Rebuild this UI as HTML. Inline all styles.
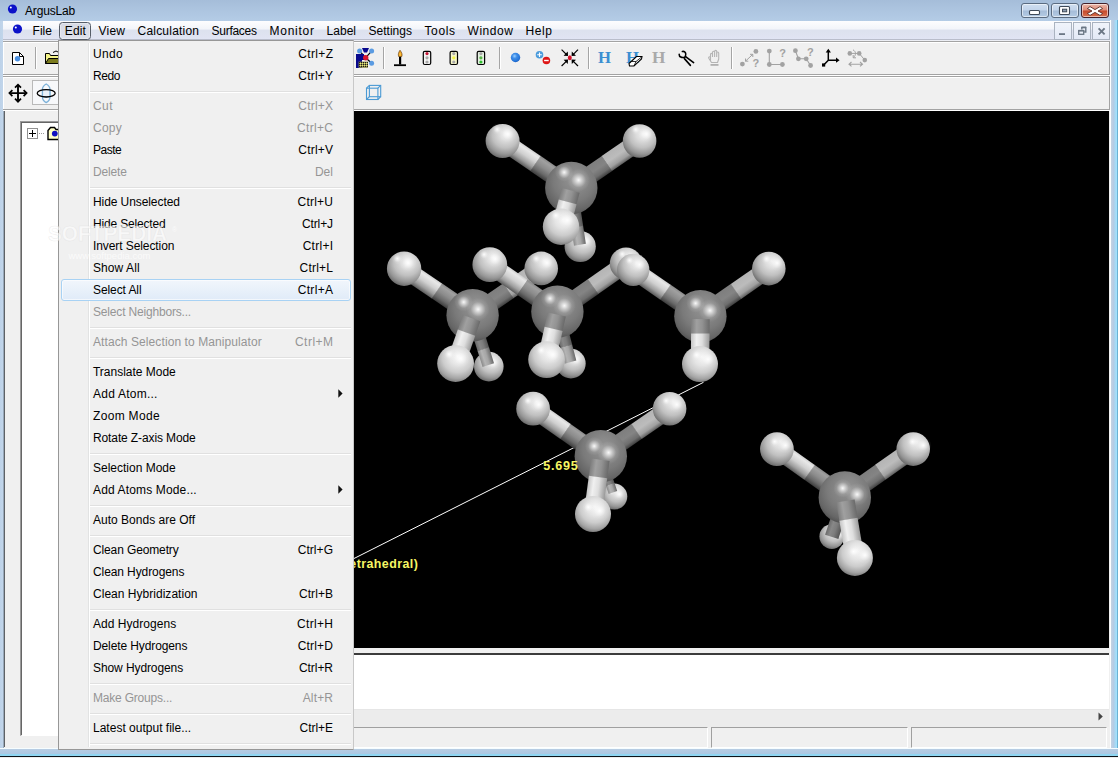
<!DOCTYPE html><html><head><meta charset="utf-8"><title>ArgusLab</title><style>
*{margin:0;padding:0;box-sizing:border-box}
html,body{width:1118px;height:758px;overflow:hidden}
body{position:relative;background:#b7d0e8;font-family:"Liberation Sans",sans-serif;font-size:12px;color:#000}
.abs{position:absolute}
#title{left:0;top:0;width:1118px;height:21px;background:linear-gradient(180deg,#a5bdd9 0,#adc5e0 50%,#b4cce6 100%)}
#frameL{left:0;top:21px;width:4px;height:737px;background:linear-gradient(90deg,#bdd2e9 0,#c1d5ea 2.6px,#93a3b4 3.6px)}
#frameR{left:1110px;top:20px;width:8px;height:737px;background:linear-gradient(90deg,#fdfeff 0,#fdfeff 1px,#c4d3e2 1px,#b4cce6 3.5px,#a9d6f0 5px,#a2e0fc 6.3px,#a2e0fc 7px,#6ab2d4 7.2px)}
#frameB{left:0;top:748px;width:1118px;height:10px;background:linear-gradient(180deg,#f6fdff 0,#f6fdff 1px,#b7cde3 1px,#adc8e2 5.5px,#90d6f2 6px,#90d6f2 8px,#0c141a 8px,#0c141a 9.3px,#eee 9.3px)}
#client{left:3px;top:21px;width:1107px;height:728px;background:#f0f0f0}
#menubar{left:3px;top:21px;width:1107px;height:20px;background:linear-gradient(180deg,#fdfdfe 0,#f3f5fa 40%,#dde2ef 50%,#dfe3f1 80%,#e2e5f6 100%);border-bottom:1px solid #eceef4;box-shadow:inset 0 -1px 0 #b9bdcb}
.mi{position:absolute;top:24px;height:14px;line-height:14px;white-space:nowrap;font-size:12px}
.t{white-space:nowrap}
#tb1{left:3px;top:41px;width:1107px;height:35px;background:#f0f0f0}
#tb2{left:3px;top:76px;width:1107px;height:35px;background:#f0f0f0}
.hl{position:absolute;left:3px;width:1107px;height:1px}
.sep{position:absolute;width:1px;background:#a0a0a0;border-right:0}
#view{left:354px;top:111px;width:755px;height:537px;background:#000}
#menu{left:58px;top:40px;width:296px;height:710px;background:#f0f0f0;border:1px solid #979797;border-right-color:#c8c8c8}
#menu .gut{position:absolute;left:29px;top:2px;width:1px;height:704px;background:#e2e3e3;border-right:0}
#menu .gut2{position:absolute;left:30px;top:2px;width:1px;height:704px;background:#fff}
.it{position:absolute;left:34px;height:22px;line-height:23px;white-space:nowrap}
.sc{position:absolute;height:22px;line-height:23px;white-space:nowrap;right:20px;text-align:right}
.dis{color:#959595}
.msep{position:absolute;left:31px;width:261px;height:2px;border-top:1px solid #e0e0e0;border-bottom:1px solid #fff}
</style></head><body>
<div id="title" class="abs"></div>
<div id="client" class="abs"></div>
<div id="frameL" class="abs"></div><div id="frameR" class="abs"></div><div id="frameB" class="abs"></div>
<svg class="abs" style="left:7px;top:3px" width="12" height="12"><circle cx="5.5" cy="6" r="4.6" fill="#0c12c8"/><circle cx="3.8" cy="4.6" r="1" fill="#fff"/></svg>
<div class="abs t" style="left:25px;top:3px;height:16px;line-height:16px;letter-spacing:-0.153px">ArgusLab</div>
<div id="menubar" class="abs"></div>
<svg class="abs" style="left:12px;top:23px" width="12" height="12"><circle cx="5.5" cy="6" r="4.6" fill="#0c12c8"/><circle cx="3.8" cy="4.6" r="1" fill="#fff"/></svg>
<div class="abs" style="left:59px;top:22px;width:32px;height:18px;border:1px solid #565d68;border-radius:3.5px;background:linear-gradient(180deg,#d6dae4,#dfe2ec);box-shadow:inset 0 0 0 1px rgba(255,255,255,.35)"></div>
<div class="mi" style="left:32.5px;letter-spacing:0.055px">File</div>
<div class="mi" style="left:64.8px;letter-spacing:0.107px">Edit</div>
<div class="mi" style="left:98.5px;letter-spacing:0.236px">View</div>
<div class="mi" style="left:137.5px;letter-spacing:0.214px">Calculation</div>
<div class="mi" style="left:211.5px;letter-spacing:-0.265px">Surfaces</div>
<div class="mi" style="left:269.5px;letter-spacing:0.748px">Monitor</div>
<div class="mi" style="left:326.5px;letter-spacing:0.035px">Label</div>
<div class="mi" style="left:368.5px;letter-spacing:0.020px">Settings</div>
<div class="mi" style="left:424.5px;letter-spacing:0.622px">Tools</div>
<div class="mi" style="left:467.5px;letter-spacing:0.564px">Window</div>
<div class="mi" style="left:525.5px;letter-spacing:0.607px">Help</div>
<div style="position:absolute;top:3px;height:15px;border:1px solid #5a6b80;border-radius:3px;box-shadow:inset 0 0 0 1px rgba(255,255,255,.55);left:1021px;width:28px;background:linear-gradient(180deg,#cfdef0 0,#c2d4ea 48%,#a5bcd8 52%,#b4cbe4 100%)"></div>
<div style="position:absolute;top:3px;height:15px;border:1px solid #5a6b80;border-radius:3px;box-shadow:inset 0 0 0 1px rgba(255,255,255,.55);left:1051px;width:28px;background:linear-gradient(180deg,#cfdef0 0,#c2d4ea 48%,#a5bcd8 52%,#b4cbe4 100%)"></div>
<div style="position:absolute;top:3px;height:15px;border:1px solid #5a6b80;border-radius:3px;box-shadow:inset 0 0 0 1px rgba(255,255,255,.55);left:1081px;width:28px;border-color:#43202a;background:linear-gradient(180deg,#eab5a8 0,#dc8a77 48%,#c5482a 52%,#d8714f 100%)"></div>
<svg class="abs" style="left:1021px;top:3px" width="88" height="15"><rect x="8.5" y="7.5" width="10" height="4" rx="1" fill="#fff" stroke="#3f4a58" stroke-width="1.1"/><rect x="38.5" y="3.5" width="10" height="8" rx="1" fill="#fff" stroke="#3f4a58" stroke-width="1.1"/><rect x="41.5" y="6.2" width="4.2" height="2.6" fill="#8c9cb0" stroke="#3f4a58" stroke-width="1"/><path d="M69 3.6 L74 6.6 L79 3.6 L81.6 5.6 L77 8 L81.6 10.4 L79 12.4 L74 9.4 L69 12.4 L66.4 10.4 L71 8 L66.4 5.6z" fill="#fff" stroke="#5a2a24" stroke-width="0.9" stroke-linejoin="round"/></svg>
<div class="abs" style="left:1054px;top:22px;width:18px;height:18px;border:1px solid #aab3c0;background:linear-gradient(180deg,#f0f4fb,#e3e9f6)"></div>
<div class="abs" style="left:1073px;top:22px;width:18px;height:18px;border:1px solid #aab3c0;background:linear-gradient(180deg,#f0f4fb,#e3e9f6)"></div>
<div class="abs" style="left:1092px;top:22px;width:18px;height:18px;border:1px solid #aab3c0;background:linear-gradient(180deg,#f0f4fb,#e3e9f6)"></div>
<svg class="abs" style="left:1054px;top:22px" width="56" height="18"><rect x="5" y="11.2" width="6" height="1.8" fill="#6b7785"/><path d="M27.8 7.6V5.6h4v4.4h-1.6" fill="none" stroke="#6b7785" stroke-width="1.4"/><path d="M27.4 5.3h4.8" stroke="#6b7785" stroke-width="1.6"/><rect x="24.7" y="8.7" width="5" height="3.6" fill="none" stroke="#6b7785" stroke-width="1.3"/><path d="M24.2 8.6h6" stroke="#6b7785" stroke-width="1.5"/><path d="M44.6 6.4l6 6M50.6 6.4l-6 6" stroke="#6b7785" stroke-width="1.9"/></svg>
<div id="tb1" class="abs"></div><div id="tb2" class="abs"></div>
<div class="hl" style="top:41px;background:#a3a3a3"></div>
<div class="hl" style="top:42px;background:#fff"></div>
<div class="hl" style="top:74px;background:#a3a3a3"></div>
<div class="hl" style="top:75px;background:#fff"></div>
<div class="hl" style="top:76px;background:#a3a3a3"></div>
<div class="hl" style="top:77px;background:#fff"></div>
<div class="hl" style="top:109px;background:#a3a3a3"></div>
<div class="hl" style="top:110px;background:#fff"></div>
<div class="abs" style="left:3px;top:42px;width:1px;height:32px;background:#fff"></div><div class="abs" style="left:3px;top:77px;width:1px;height:32px;background:#fff"></div>
<div class="abs" style="left:1109px;top:41px;width:1px;height:34px;background:#a3a3a3"></div><div class="abs" style="left:1109px;top:76px;width:1px;height:34px;background:#a3a3a3"></div>
<svg class="abs" style="left:0;top:41px" width="1118" height="70" viewBox="0 41 1118 70" font-family="Liberation Serif,serif">
<rect x="35" y="47" width="1" height="22" fill="#a5a5a5"/><rect x="36" y="47" width="1" height="22" fill="#fff"/>
<rect x="383" y="47" width="1" height="22" fill="#a5a5a5"/><rect x="384" y="47" width="1" height="22" fill="#fff"/>
<rect x="499" y="47" width="1" height="22" fill="#a5a5a5"/><rect x="500" y="47" width="1" height="22" fill="#fff"/>
<rect x="588" y="47" width="1" height="22" fill="#a5a5a5"/><rect x="589" y="47" width="1" height="22" fill="#fff"/>
<rect x="731" y="47" width="1" height="22" fill="#a5a5a5"/><rect x="732" y="47" width="1" height="22" fill="#fff"/>
<path d="M12.5 52.5H19.5L23.5 56.5V64.5H12.5z" fill="#fff" stroke="#000" stroke-width="1"/><path d="M19.5 52.5V56.5H23.5" fill="none" stroke="#000" stroke-width="1"/><circle cx="17.5" cy="58.8" r="2.7" fill="#4a90e2"/>
<path d="M45.5 63.5V53.5H49.5L50.5 55.5H58.5V63.5z" fill="#f4f48a" stroke="#000" stroke-width="1"/><path d="M45.5 63.5L48.5 58.5H61.5L58.5 63.5z" fill="#7a7a1c" stroke="#000" stroke-width="1"/><path d="M53 52.5 Q56 49.5 59 52.5" fill="none" stroke="#000" stroke-width="1"/>
<g><path d="M359.6 51.1L365.7 57.7L371.6 51.1M365.7 57.7L371.6 63.3" stroke="#000" stroke-width="1.2" fill="none"/><path d="M362 48H369L367 52.5H364z" fill="#08088c"/><rect x="356" y="54" width="6" height="14" fill="#08088c"/><rect x="356" y="54" width="8" height="6" fill="#08088c"/><circle cx="359.6" cy="51.1" r="2.5" fill="#5a9be2"/><circle cx="371.6" cy="51.1" r="2.5" fill="#5a9be2"/><circle cx="371.6" cy="63.3" r="2.5" fill="#5a9be2"/><circle cx="365.7" cy="57.7" r="2.7" fill="#d81830"/><rect x="358.6" y="61.6" width="9.4" height="6.2" fill="#8c8c50"/><path d="M359 62.5h9M359 64.5h9M359 66.5h9" stroke="#202010" stroke-width="1" stroke-dasharray="1 1"/><path d="M360 63.5h8M360 65.5h8" stroke="#e8e878" stroke-width="1" stroke-dasharray="1 1"/></g>
<rect x="394" y="64.3" width="12" height="1.8" fill="#000"/><rect x="399" y="56.5" width="2.2" height="8" fill="#000"/><path d="M400 50.2C398.5 52.5 398 54 398.6 56.5H401.8C402.6 54.5 401.8 52.5 400 50.2z" fill="#f6a21c" stroke="#503008" stroke-width="0.6"/><path d="M400 52.5C399.5 54 399.6 55 400 56.4 400.8 55 400.6 53.8 400 52.5z" fill="#ffe36a"/>
<rect x="423.3" y="51.3" width="7.4" height="13.2" rx="1.5" fill="#f4f4f4" stroke="#000" stroke-width="1.2"/>
<circle cx="427.0" cy="53.6" r="1.6" fill="#c41838"/>
<circle cx="427.0" cy="57.8" r="1.6" fill="#a8a8a8"/>
<circle cx="427.0" cy="62.0" r="1.6" fill="#a8a8a8"/>
<rect x="450.1" y="51.3" width="7.4" height="13.2" rx="1.5" fill="#f6f6c8" stroke="#000" stroke-width="1.2"/>
<circle cx="453.8" cy="53.6" r="1.6" fill="#a8a8a8"/>
<circle cx="453.8" cy="57.8" r="1.6" fill="#f2f24a"/>
<circle cx="453.8" cy="62.0" r="1.6" fill="#a8a8a8"/>
<rect x="477.2" y="51.3" width="7.4" height="13.2" rx="1.5" fill="#e4f0e0" stroke="#000" stroke-width="1.2"/>
<circle cx="480.9" cy="53.6" r="1.6" fill="#a8a8a8"/>
<circle cx="480.9" cy="57.8" r="1.6" fill="#58b848"/>
<circle cx="480.9" cy="62.0" r="1.6" fill="#30c030"/>
<defs><radialGradient id="bs" cx="0.4" cy="0.35" r="0.7"><stop offset="0" stop-color="#9ad0ff"/><stop offset="0.35" stop-color="#3f8ee8"/><stop offset="0.8" stop-color="#2272d8"/><stop offset="1" stop-color="#1656b4"/></radialGradient></defs>
<circle cx="515.5" cy="57.5" r="4.7" fill="url(#bs)"/>
<circle cx="539.5" cy="54.7" r="3.8" fill="#4c9cdc"/><path d="M537.2 54.7h4.6M539.5 52.4v4.6" stroke="#fff" stroke-width="1.1"/>
<circle cx="546.4" cy="60.5" r="3.8" fill="#de1616"/><path d="M544.1 60.5h4.6" stroke="#fff" stroke-width="1.4"/>
<g stroke="#000" stroke-width="1.2" fill="#000">
<path d="M561.6 49.6L566.3 54.3" fill="none"/><path d="M568.0 56.0L563.6 55.8L567.8 51.6z" stroke="none"/>
<path d="M578.0 49.6L573.3 54.3" fill="none"/><path d="M571.6 56.0L576.0 55.8L571.8 51.6z" stroke="none"/>
<path d="M561.6 66.0L566.3 61.3" fill="none"/><path d="M568.0 59.6L563.6 59.8L567.8 64.0z" stroke="none"/>
<path d="M578.0 66.0L573.3 61.3" fill="none"/><path d="M571.6 59.6L576.0 59.8L571.8 64.0z" stroke="none"/>
</g><ellipse cx="569.8" cy="57.8" rx="2" ry="2.5" fill="#d4142c"/>
<text x="598" y="63" font-size="16" font-weight="bold" fill="#3b8fd2" textLength="13" lengthAdjust="spacingAndGlyphs">H</text>
<text x="626" y="63" font-size="16" font-weight="bold" fill="#3b8fd2" textLength="13" lengthAdjust="spacingAndGlyphs">H</text>
<path d="M629 63.5L636.5 56.5H642L641.5 59L634 66H629.5z" fill="#fff" stroke="#000" stroke-width="1.1"/><path d="M634 66L636 61.5 641.8 56.8M636 61.5H630.5" fill="none" stroke="#000" stroke-width="0.8"/>
<text x="652" y="63" font-size="16" font-weight="bold" fill="#a9a9a9" textLength="13.4" lengthAdjust="spacingAndGlyphs">H</text>
<g fill="none" stroke="#000" stroke-width="1.6" stroke-linecap="round"><path d="M685.3 56.6C686.6 53.4 685.2 51 682.4 51.5"/><path d="M684.7 57.3C681.6 58 679.2 57 679.2 54.4"/><path d="M685.6 56.6L693.6 62.6"/><path d="M684.4 58.6L690.4 65.4"/></g>
<g fill="none" stroke="#b4b4b4" stroke-width="1.1" stroke-linejoin="round"><path d="M710.5 60.5V54.5C710.5 53 712.5 53 712.5 54.5V52.3C712.5 50.8 714.6 50.8 714.6 52.3V51.5C714.6 50 716.7 50 716.7 51.5V53C716.7 51.6 718.7 51.6 718.7 53V59L717.5 62.5H711.5L708.8 58.2C708.2 57 709.5 56.2 710.5 57.5"/><path d="M712.5 54.5V57M714.6 52.3V57M716.7 53V57"/></g><rect x="710.5" y="64" width="8" height="1.8" fill="#b0b0b0"/>
<g fill="#a2a2a2" stroke="#a2a2a2" font-family="Liberation Sans,sans-serif" font-weight="bold" font-size="11">
<circle cx="742.4" cy="64.1" r="2.4" stroke="none"/><circle cx="755.9" cy="51.4" r="2.4" stroke="none"/><path d="M745.5 61.2L752.8 54.3M745.5 58.5V61.2H748.3M750 54.3H752.8V57" fill="none" stroke-width="1"/><text x="752.4" y="66.5" stroke="none">?</text>
<circle cx="769.3" cy="51.1" r="2.4" stroke="none"/><circle cx="769.3" cy="64.5" r="2.4" stroke="none"/><circle cx="782.4" cy="64.5" r="2.4" stroke="none"/><path d="M769.3 51.1V64.5H782.4" fill="none" stroke-width="1.1"/><text x="779.2" y="57.4" stroke="none">?</text>
<circle cx="795.4" cy="50.7" r="2.4" stroke="none"/><circle cx="798.4" cy="58.8" r="2.4" stroke="none"/><circle cx="806.2" cy="58.8" r="2.4" stroke="none"/><circle cx="810.6" cy="65.5" r="2.4" stroke="none"/><path d="M795.4 50.7L798.4 58.8H806.2L810.6 65.5" fill="none" stroke-width="1.1"/><text x="807" y="56.2" stroke="none">?</text>
<circle cx="849.8" cy="53.4" r="2.3" stroke="none"/><circle cx="859.2" cy="53.4" r="2.3" stroke="none"/><circle cx="864.8" cy="60.1" r="2.3" stroke="none"/><path d="M849.8 53.4H859.2L864.8 60.1" fill="none" stroke-width="1"/><path d="M853 49.8C856 51.5 856.5 54.5 853.5 57.6M853.2 55V57.8H856" fill="none" stroke-width="1"/><path d="M849 64.2H862.5M851.5 62L849 64.2L851.5 66.4M860 62L862.5 64.2L860 66.4" fill="none" stroke-width="1.1"/>
</g>
<g stroke="#000" fill="#000"><path d="M828.3 60.2V50.5M828.3 60.2H837.5M828.3 60.2L824.2 64.6" stroke-width="1.5" fill="none"/><path d="M828.3 48.8L830.9 52.4H825.7z" stroke="none"/><path d="M839.6 60.2L836 57.6V62.8z" stroke="none"/><rect x="822" y="63.4" width="3.2" height="3.2" stroke="none"/></g>
<g stroke="#000" stroke-width="1.9" fill="none"><path d="M18 85.5V100.8M10.3 93.1H25.7"/><path d="M15 87.6L18 84.6L21 87.6M15 98.7L18 101.7L21 98.7M12.4 90.1L9.4 93.1L12.4 96.1M23.6 90.1L26.6 93.1L23.6 96.1" stroke-width="1.7"/></g>
<rect x="32.5" y="80.5" width="26" height="24" fill="#f7f8fa" stroke="#b9b9b9" stroke-width="1"/>
<path d="M46.2 84Q50 86.2 50 89.6V97Q50 100.4 46.2 102.6Q42.4 100.4 42.4 97V89.6Q42.4 86.2 46.2 84z" fill="none" stroke="#7cb1d8" stroke-width="1.3"/><rect x="42.6" y="89.6" width="7.2" height="7.4" fill="#eaf1f8" stroke="#7cb1d8" stroke-width="1"/><ellipse cx="46.2" cy="93.3" rx="9" ry="3.7" fill="none" stroke="#000" stroke-width="1.3"/>
<g fill="none" stroke="#4b9ad4" stroke-width="1.1"><rect x="366.5" y="88.2" width="11.4" height="11.3"/><rect x="369.4" y="85.4" width="11.3" height="11.3"/><path d="M366.5 88.2L369.4 85.4M377.9 88.2L380.7 85.4M366.5 99.5L369.4 96.7M377.9 99.5L380.7 96.7"/></g>
</svg>
<div id="view" class="abs"></div>
<svg class="abs" style="left:354px;top:111px" width="755" height="537" viewBox="354 111 755 537">
<defs>
<radialGradient id="gC" cx="0.55" cy="0.38" r="0.72" fx="0.56" fy="0.32">
<stop offset="0" stop-color="#949494"/><stop offset="0.3" stop-color="#878787"/><stop offset="0.55" stop-color="#7a7a7a"/><stop offset="0.78" stop-color="#666"/><stop offset="0.92" stop-color="#4e4e4e"/><stop offset="1" stop-color="#3a3a3a"/></radialGradient>
<radialGradient id="gH" cx="0.58" cy="0.34" r="0.78" fx="0.6" fy="0.28">
<stop offset="0" stop-color="#f0f0f0"/><stop offset="0.25" stop-color="#dcdcdc"/><stop offset="0.5" stop-color="#c0c0c0"/><stop offset="0.72" stop-color="#969696"/><stop offset="0.88" stop-color="#6a6a6a"/><stop offset="1" stop-color="#3c3c3c"/></radialGradient>
<radialGradient id="gF" cx="0.55" cy="0.36" r="0.74" fx="0.56" fy="0.3">
<stop offset="0" stop-color="#f6f6f6"/><stop offset="0.3" stop-color="#e4e4e4"/><stop offset="0.55" stop-color="#cccccc"/><stop offset="0.76" stop-color="#a4a4a4"/><stop offset="0.9" stop-color="#767676"/><stop offset="1" stop-color="#4e4e4e"/></radialGradient>
<linearGradient id="bL2" x1="0" y1="0" x2="0" y2="1"><stop offset="0" stop-color="#8a8a8a"/><stop offset="0.3" stop-color="#b4b4b4"/><stop offset="0.6" stop-color="#a6a6a6"/><stop offset="1" stop-color="#6a6a6a"/></linearGradient>
<linearGradient id="bD2" x1="0" y1="0" x2="0" y2="1"><stop offset="0" stop-color="#6a6a6a"/><stop offset="0.3" stop-color="#888"/><stop offset="0.6" stop-color="#7c7c7c"/><stop offset="1" stop-color="#545454"/></linearGradient>
<linearGradient id="bL3" x1="0" y1="0" x2="0" y2="1"><stop offset="0" stop-color="#c4c4c4"/><stop offset="0.3" stop-color="#f0f0f0"/><stop offset="0.6" stop-color="#dedede"/><stop offset="1" stop-color="#9a9a9a"/></linearGradient>
<linearGradient id="bD3" x1="0" y1="0" x2="0" y2="1"><stop offset="0" stop-color="#7e7e7e"/><stop offset="0.3" stop-color="#a0a0a0"/><stop offset="0.6" stop-color="#929292"/><stop offset="1" stop-color="#6a6a6a"/></linearGradient>
<radialGradient id="gS" cx="0.5" cy="0.5" r="0.5"><stop offset="0" stop-color="#fff" stop-opacity="0.95"/><stop offset="0.3" stop-color="#fff" stop-opacity="0.55"/><stop offset="0.65" stop-color="#fff" stop-opacity="0.12"/><stop offset="1" stop-color="#fff" stop-opacity="0"/></radialGradient>
<linearGradient id="bL" x1="0" y1="0" x2="0" y2="1"><stop offset="0" stop-color="#cecece"/><stop offset="0.14" stop-color="#e8e8e8"/><stop offset="0.45" stop-color="#d0d0d0"/><stop offset="0.75" stop-color="#9e9e9e"/><stop offset="1" stop-color="#5a5a5a"/></linearGradient>
<linearGradient id="bLr" x1="0" y1="0" x2="0" y2="1"><stop offset="0" stop-color="#b4b4b4"/><stop offset="0.45" stop-color="#bcbcbc"/><stop offset="0.78" stop-color="#a0a0a0"/><stop offset="1" stop-color="#5c5c5c"/></linearGradient>
<linearGradient id="bDr" x1="0" y1="0" x2="0" y2="1"><stop offset="0" stop-color="#7e7e7e"/><stop offset="0.45" stop-color="#848484"/><stop offset="0.78" stop-color="#6e6e6e"/><stop offset="1" stop-color="#3e3e3e"/></linearGradient>
<linearGradient id="bD" x1="0" y1="0" x2="0" y2="1"><stop offset="0" stop-color="#8a8a8a"/><stop offset="0.14" stop-color="#a0a0a0"/><stop offset="0.45" stop-color="#8c8c8c"/><stop offset="0.75" stop-color="#6a6a6a"/><stop offset="1" stop-color="#3c3c3c"/></linearGradient>
</defs>
<rect x="354" y="111" width="755" height="537" fill="#000"/>
<line x1="353" y1="559" x2="703.5" y2="382.3" stroke="#fff" stroke-width="1"/>
<circle cx="580.2" cy="246.5" r="15.6" fill="url(#gH)"/>
<circle cx="576.1" cy="237.1" r="5.3" fill="url(#gS)"/>
<circle cx="585.9" cy="241.1" r="7.8" fill="url(#gS)"/>
<g transform="translate(571.3 188.0) rotate(81.35) scale(1,-1)"><rect x="0.0" y="-6.0" width="39.4" height="12.0" fill="url(#bD2)"/><rect x="39.1" y="-6.0" width="18.3" height="12.0" fill="url(#bL2)"/></g>
<g transform="translate(571.3 188.0) rotate(-145.62) scale(1,-1)"><rect x="0.0" y="-9.1" width="43.6" height="18.2" fill="url(#bD)"/><rect x="43.3" y="-9.1" width="40.0" height="18.2" fill="url(#bL)"/></g>
<g transform="translate(571.3 188.0) rotate(-34.53)"><rect x="0.0" y="-9.1" width="43.4" height="18.2" fill="url(#bDr)"/><rect x="43.1" y="-9.1" width="39.8" height="18.2" fill="url(#bLr)"/></g>
<circle cx="571.3" cy="188.0" r="26.2" fill="url(#gC)"/>
<circle cx="564.2" cy="172.3" r="9.4" fill="url(#gS)"/>
<circle cx="578.6" cy="180.1" r="11.5" fill="url(#gS)"/>
<circle cx="502.6" cy="141.0" r="17.0" fill="url(#gH)"/>
<circle cx="497.2" cy="129.3" r="5.8" fill="url(#gS)"/>
<circle cx="507.9" cy="134.1" r="8.5" fill="url(#gS)"/>
<circle cx="639.6" cy="141.0" r="16.8" fill="url(#gH)"/>
<circle cx="635.8" cy="129.4" r="5.7" fill="url(#gS)"/>
<circle cx="646.4" cy="134.1" r="8.4" fill="url(#gS)"/>
<g transform="translate(571.3 188.0) rotate(104.90) scale(1,-1)"><rect x="2.4" y="-9.2" width="12.3" height="18.5" fill="url(#bD3)"/><rect x="14.4" y="-9.2" width="25.6" height="18.5" fill="url(#bL3)"/></g>
<circle cx="561.0" cy="226.7" r="18.2" fill="url(#gF)"/>
<circle cx="555.9" cy="215.4" r="6.2" fill="url(#gS)"/>
<circle cx="567.4" cy="220.2" r="9.1" fill="url(#gS)"/>
<circle cx="488.8" cy="366.6" r="14.8" fill="url(#gH)"/>
<circle cx="483.9" cy="359.1" r="5.0" fill="url(#gS)"/>
<circle cx="493.2" cy="362.6" r="7.4" fill="url(#gS)"/>
<g transform="translate(472.6 315.2) rotate(72.51) scale(1,-1)"><rect x="0.0" y="-6.0" width="35.9" height="12.0" fill="url(#bD2)"/><rect x="35.6" y="-6.0" width="16.7" height="12.0" fill="url(#bL2)"/></g>
<g transform="translate(472.6 315.2) rotate(-145.83) scale(1,-1)"><rect x="0.0" y="-9.1" width="43.4" height="18.2" fill="url(#bD)"/><rect x="43.1" y="-9.1" width="39.7" height="18.2" fill="url(#bL)"/></g>
<g transform="translate(472.6 315.2) rotate(-34.30)"><rect x="0.0" y="-9.1" width="43.5" height="18.2" fill="url(#bDr)"/><rect x="43.2" y="-9.1" width="39.9" height="18.2" fill="url(#bLr)"/></g>
<circle cx="472.6" cy="315.2" r="26.2" fill="url(#gC)"/>
<circle cx="463.7" cy="302.1" r="9.4" fill="url(#gS)"/>
<circle cx="478.1" cy="309.3" r="11.5" fill="url(#gS)"/>
<circle cx="404.1" cy="268.7" r="17.2" fill="url(#gH)"/>
<circle cx="397.4" cy="258.6" r="5.8" fill="url(#gS)"/>
<circle cx="408.2" cy="263.0" r="8.6" fill="url(#gS)"/>
<circle cx="541.2" cy="268.4" r="16.8" fill="url(#gH)"/>
<circle cx="536.3" cy="258.6" r="5.7" fill="url(#gS)"/>
<circle cx="546.9" cy="262.8" r="8.4" fill="url(#gS)"/>
<g transform="translate(472.6 315.2) rotate(109.35) scale(1,-1)"><rect x="3.1" y="-9.2" width="15.7" height="18.5" fill="url(#bD3)"/><rect x="18.5" y="-9.2" width="32.8" height="18.5" fill="url(#bL3)"/></g>
<circle cx="455.6" cy="363.6" r="18.4" fill="url(#gF)"/>
<circle cx="449.1" cy="354.2" r="6.3" fill="url(#gS)"/>
<circle cx="460.7" cy="358.5" r="9.2" fill="url(#gS)"/>
<circle cx="570.9" cy="363.6" r="14.8" fill="url(#gH)"/>
<circle cx="566.9" cy="356.1" r="5.0" fill="url(#gS)"/>
<circle cx="576.2" cy="359.5" r="7.4" fill="url(#gS)"/>
<g transform="translate(557.4 311.6) rotate(75.45) scale(1,-1)"><rect x="0.0" y="-6.0" width="35.8" height="12.0" fill="url(#bD2)"/><rect x="35.5" y="-6.0" width="16.7" height="12.0" fill="url(#bL2)"/></g>
<g transform="translate(557.4 311.6) rotate(-145.25) scale(1,-1)"><rect x="0.0" y="-9.1" width="43.1" height="18.2" fill="url(#bD)"/><rect x="42.8" y="-9.1" width="39.5" height="18.2" fill="url(#bL)"/></g>
<g transform="translate(557.4 311.6) rotate(-34.98)"><rect x="0.0" y="-9.1" width="43.8" height="18.2" fill="url(#bDr)"/><rect x="43.5" y="-9.1" width="40.2" height="18.2" fill="url(#bLr)"/></g>
<circle cx="557.4" cy="311.6" r="26.2" fill="url(#gC)"/>
<circle cx="550.0" cy="298.5" r="9.4" fill="url(#gS)"/>
<circle cx="564.4" cy="305.7" r="11.5" fill="url(#gS)"/>
<circle cx="489.8" cy="264.7" r="17.4" fill="url(#gH)"/>
<circle cx="484.1" cy="254.5" r="5.9" fill="url(#gS)"/>
<circle cx="495.0" cy="258.9" r="8.7" fill="url(#gS)"/>
<circle cx="626.0" cy="263.6" r="16.2" fill="url(#gH)"/>
<circle cx="622.2" cy="254.0" r="5.5" fill="url(#gS)"/>
<circle cx="632.4" cy="258.2" r="8.1" fill="url(#gS)"/>
<g transform="translate(557.4 311.6) rotate(102.65) scale(1,-1)"><rect x="3.0" y="-9.2" width="15.1" height="18.5" fill="url(#bD3)"/><rect x="17.7" y="-9.2" width="31.6" height="18.5" fill="url(#bL3)"/></g>
<circle cx="546.6" cy="359.7" r="18.4" fill="url(#gF)"/>
<circle cx="541.3" cy="350.3" r="6.3" fill="url(#gS)"/>
<circle cx="552.9" cy="354.6" r="9.2" fill="url(#gS)"/>
<g transform="translate(700.4 316.3) rotate(-145.38) scale(1,-1)"><rect x="0.0" y="-9.1" width="42.8" height="18.2" fill="url(#bD)"/><rect x="42.5" y="-9.1" width="39.2" height="18.2" fill="url(#bL)"/></g>
<g transform="translate(700.4 316.3) rotate(-34.89)"><rect x="0.0" y="-9.1" width="43.7" height="18.2" fill="url(#bDr)"/><rect x="43.4" y="-9.1" width="40.0" height="18.2" fill="url(#bLr)"/></g>
<circle cx="700.4" cy="316.3" r="26.2" fill="url(#gC)"/>
<circle cx="695.6" cy="303.3" r="9.4" fill="url(#gS)"/>
<circle cx="710.0" cy="310.5" r="11.5" fill="url(#gS)"/>
<circle cx="633.2" cy="269.9" r="16.2" fill="url(#gH)"/>
<circle cx="629.5" cy="260.4" r="5.5" fill="url(#gS)"/>
<circle cx="639.7" cy="264.5" r="8.1" fill="url(#gS)"/>
<circle cx="768.8" cy="268.6" r="16.8" fill="url(#gH)"/>
<circle cx="766.6" cy="258.8" r="5.7" fill="url(#gS)"/>
<circle cx="777.1" cy="263.0" r="8.4" fill="url(#gS)"/>
<g transform="translate(700.4 316.3) rotate(90.48) scale(1,-1)"><rect x="2.9" y="-9.2" width="14.6" height="18.5" fill="url(#bD3)"/><rect x="17.2" y="-9.2" width="30.6" height="18.5" fill="url(#bL3)"/></g>
<circle cx="700.0" cy="364.1" r="18.0" fill="url(#gF)"/>
<circle cx="696.7" cy="354.9" r="6.1" fill="url(#gS)"/>
<circle cx="708.1" cy="359.2" r="9.0" fill="url(#gS)"/>
<circle cx="614.3" cy="496.6" r="13.0" fill="url(#gH)"/>
<circle cx="611.2" cy="491.4" r="4.4" fill="url(#gS)"/>
<circle cx="619.3" cy="494.1" r="6.5" fill="url(#gS)"/>
<g transform="translate(600.8 456.2) rotate(71.52) scale(1,-1)"><rect x="0.0" y="-4.5" width="30.1" height="9.0" fill="url(#bD2)"/><rect x="29.8" y="-4.5" width="8.5" height="9.0" fill="url(#bL2)"/></g>
<g transform="translate(600.8 456.2) rotate(-144.95) scale(1,-1)"><rect x="0.0" y="-9.1" width="43.3" height="18.2" fill="url(#bD)"/><rect x="43.0" y="-9.1" width="39.7" height="18.2" fill="url(#bL)"/></g>
<g transform="translate(600.8 456.2) rotate(-34.62)"><rect x="0.0" y="-9.1" width="43.8" height="18.2" fill="url(#bDr)"/><rect x="43.5" y="-9.1" width="40.1" height="18.2" fill="url(#bLr)"/></g>
<circle cx="600.8" cy="456.2" r="26.2" fill="url(#gC)"/>
<circle cx="594.2" cy="446.1" r="9.4" fill="url(#gS)"/>
<circle cx="608.6" cy="452.6" r="11.5" fill="url(#gS)"/>
<circle cx="533.1" cy="408.7" r="16.9" fill="url(#gH)"/>
<circle cx="528.0" cy="400.7" r="5.7" fill="url(#gS)"/>
<circle cx="538.7" cy="404.5" r="8.4" fill="url(#gS)"/>
<circle cx="669.6" cy="408.7" r="16.8" fill="url(#gH)"/>
<circle cx="666.2" cy="400.7" r="5.7" fill="url(#gS)"/>
<circle cx="676.8" cy="404.5" r="8.4" fill="url(#gS)"/>
<g transform="translate(600.8 456.2) rotate(97.67) scale(1,-1)"><rect x="3.5" y="-9.2" width="17.8" height="18.5" fill="url(#bD3)"/><rect x="21.0" y="-9.2" width="37.4" height="18.5" fill="url(#bL3)"/></g>
<circle cx="593.0" cy="514.1" r="18.0" fill="url(#gF)"/>
<circle cx="588.4" cy="507.1" r="6.1" fill="url(#gS)"/>
<circle cx="599.7" cy="510.8" r="9.0" fill="url(#gS)"/>
<circle cx="831.8" cy="536.6" r="12.4" fill="url(#gH)"/>
<circle cx="830.7" cy="532.0" r="4.2" fill="url(#gS)"/>
<circle cx="838.5" cy="534.5" r="6.2" fill="url(#gS)"/>
<g transform="translate(844.8 497.4) rotate(108.35) scale(1,-1)"><rect x="0.0" y="-7.0" width="41.6" height="14.0" fill="url(#bD2)"/><rect x="41.3" y="-7.0" width="-2.1" height="14.0" fill="url(#bL2)"/></g>
<g transform="translate(844.8 497.4) rotate(-144.57) scale(1,-1)"><rect x="0.0" y="-9.1" width="43.6" height="18.2" fill="url(#bD)"/><rect x="43.3" y="-9.1" width="40.0" height="18.2" fill="url(#bL)"/></g>
<g transform="translate(844.8 497.4) rotate(-35.23)"><rect x="0.0" y="-9.1" width="43.8" height="18.2" fill="url(#bDr)"/><rect x="43.5" y="-9.1" width="40.2" height="18.2" fill="url(#bLr)"/></g>
<circle cx="844.8" cy="497.4" r="26.2" fill="url(#gC)"/>
<circle cx="842.7" cy="488.2" r="9.4" fill="url(#gS)"/>
<circle cx="857.1" cy="494.4" r="11.5" fill="url(#gS)"/>
<circle cx="776.9" cy="449.1" r="16.9" fill="url(#gH)"/>
<circle cx="774.7" cy="441.6" r="5.7" fill="url(#gS)"/>
<circle cx="785.4" cy="445.3" r="8.4" fill="url(#gS)"/>
<circle cx="913.2" cy="449.1" r="16.8" fill="url(#gH)"/>
<circle cx="912.6" cy="441.7" r="5.7" fill="url(#gS)"/>
<circle cx="923.2" cy="445.3" r="8.4" fill="url(#gS)"/>
<g transform="translate(844.8 497.4) rotate(80.52) scale(1,-1)"><rect x="3.7" y="-9.2" width="18.7" height="18.5" fill="url(#bD3)"/><rect x="22.1" y="-9.2" width="39.3" height="18.5" fill="url(#bL3)"/></g>
<circle cx="854.9" cy="557.9" r="18.0" fill="url(#gF)"/>
<circle cx="853.6" cy="551.5" r="6.1" fill="url(#gS)"/>
<circle cx="864.9" cy="555.1" r="9.0" fill="url(#gS)"/>
<text x="543.2" y="469.6" font-family="Liberation Sans,sans-serif" font-weight="bold" font-size="12.6" fill="#f6f664" letter-spacing="0.75">5.695</text>
<text x="349.3" y="567.8" font-family="Liberation Sans,sans-serif" font-weight="bold" font-size="12.4" fill="#f6f664" letter-spacing="0.45">etrahedral)</text>
</svg>
<div class="abs" style="left:4px;top:111px;width:1px;height:636px;background:#5e6266"></div>
<div class="abs" style="left:20px;top:121px;width:334px;height:615px;background:#fff;border-left:2px solid #9a9a9a;border-top:2px solid #9a9a9a;border-bottom:1px solid #fff"></div>
<div class="abs" style="left:21px;top:122px;width:333px;height:1px;background:#666"></div><div class="abs" style="left:21px;top:122px;width:1px;height:613px;background:#666"></div>
<div class="abs" style="left:27px;top:128px;width:11px;height:11px;border:1px solid #919191;background:#fff"></div>
<div class="abs" style="left:29px;top:133px;width:7px;height:1px;background:#000"></div><div class="abs" style="left:32px;top:130px;width:1px;height:7px;background:#000"></div>
<div class="abs" style="left:39px;top:133px;width:6px;height:1px;background:repeating-linear-gradient(90deg,#9a9a9a 0 1px,#fff 1px 2px)"></div>
<svg class="abs" style="left:46px;top:126px" width="16" height="15"><path d="M2 13.5V4.5L4.5 1.5H8.5L10 3.5H15V13.5z" fill="#ffffc6" stroke="#000" stroke-width="1.4"/><circle cx="8.8" cy="7.6" r="2.9" fill="#1010c0"/></svg>
<div class="abs" style="left:354px;top:648px;width:755px;height:4px;background:#f0f0f0"></div>
<div class="abs" style="left:354px;top:653px;width:755px;height:2px;background:#3c3c3c"></div>
<div class="abs" style="left:354px;top:655px;width:755px;height:54px;background:#fff"></div>
<div class="abs" style="left:354px;top:709px;width:755px;height:18px;background:#ececec;border-top:1px solid #e6e6e6"></div>
<svg class="abs" style="left:1098px;top:712px" width="6" height="9"><path d="M0.5 0.5 L4.8 4.5 L0.5 8.5z" fill="#444"/></svg>
<div class="abs" style="left:60px;top:727px;width:1049px;height:21px;background:#f0f0f0"></div>
<div class="abs" style="left:60px;top:727px;width:648px;height:21px;border-top:1px solid #a0a0a0;border-left:1px solid #a0a0a0;border-right:1px solid #fff;border-bottom:1px solid #fff"></div>
<div class="abs" style="left:711px;top:727px;width:197px;height:21px;border-top:1px solid #a0a0a0;border-left:1px solid #a0a0a0;border-right:1px solid #fff;border-bottom:1px solid #fff"></div>
<div class="abs" style="left:911px;top:727px;width:196px;height:21px;border-top:1px solid #a0a0a0;border-left:1px solid #a0a0a0;border-right:1px solid #fff;border-bottom:1px solid #fff"></div>
<div id="menu" class="abs"><div class="gut"></div><div class="gut2"></div>
<div class="it" style="top:2px;letter-spacing:0.305px">Undo</div>
<div class="sc" style="top:2px;letter-spacing:0.340px;margin-right:-0.340px">Ctrl+Z</div>
<div class="it" style="top:24px;letter-spacing:-0.395px">Redo</div>
<div class="sc" style="top:24px;letter-spacing:0.205px;margin-right:-0.205px">Ctrl+Y</div>
<div class="msep" style="top:50px"></div>
<div class="it dis" style="top:54px;letter-spacing:0.413px">Cut</div>
<div class="sc dis" style="top:54px;letter-spacing:0.205px;margin-right:-0.205px">Ctrl+X</div>
<div class="it dis" style="top:76px;letter-spacing:0.229px">Copy</div>
<div class="sc dis" style="top:76px;letter-spacing:0.313px;margin-right:-0.313px">Ctrl+C</div>
<div class="it" style="top:98px;letter-spacing:-0.496px">Paste</div>
<div class="sc" style="top:98px;letter-spacing:0.205px;margin-right:-0.205px">Ctrl+V</div>
<div class="it dis" style="top:120px;letter-spacing:-0.177px">Delete</div>
<div class="sc dis" style="top:120px;letter-spacing:0.048px;margin-right:-0.048px">Del</div>
<div class="msep" style="top:146px"></div>
<div class="it" style="top:150px;letter-spacing:-0.082px">Hide Unselected</div>
<div class="sc" style="top:150px;letter-spacing:0.233px;margin-right:-0.233px">Ctrl+U</div>
<div class="it" style="top:172px;letter-spacing:-0.176px">Hide Selected</div>
<div class="sc" style="top:172px;letter-spacing:-0.134px;margin-right:0.134px">Ctrl+J</div>
<div class="it" style="top:194px;letter-spacing:-0.087px">Invert Selection</div>
<div class="sc" style="top:194px;letter-spacing:0.259px;margin-right:-0.259px">Ctrl+I</div>
<div class="it" style="top:216px;letter-spacing:0.082px">Show All</div>
<div class="sc" style="top:216px;letter-spacing:0.231px;margin-right:-0.231px">Ctrl+L</div>
<div class="abs" style="left:2px;top:238px;width:290px;height:22px;border:1px solid #a8d2f4;border-radius:3px;background:linear-gradient(180deg,#f1f6fc,#e0ebf8);box-shadow:inset 0 0 0 1px rgba(255,255,255,.6)"></div>
<div class="it" style="top:238px;letter-spacing:-0.084px">Select All</div>
<div class="sc" style="top:238px;letter-spacing:0.325px;margin-right:-0.325px">Ctrl+A</div>
<div class="it dis" style="top:260px;letter-spacing:-0.177px">Select Neighbors...</div>
<div class="msep" style="top:286px"></div>
<div class="it dis" style="top:290px;letter-spacing:0.090px">Attach Selection to Manipulator</div>
<div class="sc dis" style="top:290px;letter-spacing:0.467px;margin-right:-0.467px">Ctrl+M</div>
<div class="msep" style="top:316px"></div>
<div class="it" style="top:320px;letter-spacing:-0.017px">Translate Mode</div>
<div class="it" style="top:342px;letter-spacing:0.236px">Add Atom...</div>
<svg class="abs" style="left:279px;top:348px" width="6" height="9"><path d="M0.3 0.3 L4.6 4.5 L0.3 8.7z" fill="#111"/></svg>
<div class="it" style="top:364px;letter-spacing:0.322px">Zoom Mode</div>
<div class="it" style="top:386px;letter-spacing:-0.118px">Rotate Z-axis Mode</div>
<div class="msep" style="top:412px"></div>
<div class="it" style="top:416px;letter-spacing:-0.001px">Selection Mode</div>
<div class="it" style="top:438px;letter-spacing:0.145px">Add Atoms Mode...</div>
<svg class="abs" style="left:279px;top:444px" width="6" height="9"><path d="M0.3 0.3 L4.6 4.5 L0.3 8.7z" fill="#111"/></svg>
<div class="msep" style="top:464px"></div>
<div class="it" style="top:468px;letter-spacing:0.009px">Auto Bonds are Off</div>
<div class="msep" style="top:494px"></div>
<div class="it" style="top:498px;letter-spacing:-0.128px">Clean Geometry</div>
<div class="sc" style="top:498px;letter-spacing:0.059px;margin-right:-0.059px">Ctrl+G</div>
<div class="it" style="top:520px;letter-spacing:-0.094px">Clean Hydrogens</div>
<div class="it" style="top:542px;letter-spacing:0.025px">Clean Hybridization</div>
<div class="sc" style="top:542px;letter-spacing:0.065px;margin-right:-0.065px">Ctrl+B</div>
<div class="msep" style="top:568px"></div>
<div class="it" style="top:572px;letter-spacing:0.040px">Add Hydrogens</div>
<div class="sc" style="top:572px;letter-spacing:0.333px;margin-right:-0.333px">Ctrl+H</div>
<div class="it" style="top:594px;letter-spacing:-0.110px">Delete Hydrogens</div>
<div class="sc" style="top:594px;letter-spacing:0.193px;margin-right:-0.193px">Ctrl+D</div>
<div class="it" style="top:616px;letter-spacing:-0.091px">Show Hydrogens</div>
<div class="sc" style="top:616px;letter-spacing:-0.067px;margin-right:0.067px">Ctrl+R</div>
<div class="msep" style="top:642px"></div>
<div class="it dis" style="top:646px;letter-spacing:-0.203px">Make Groups...</div>
<div class="sc dis" style="top:646px;letter-spacing:0.155px;margin-right:-0.155px">Alt+R</div>
<div class="msep" style="top:672px"></div>
<div class="it" style="top:676px;letter-spacing:0.007px">Latest output file...</div>
<div class="sc" style="top:676px;letter-spacing:-0.035px;margin-right:0.035px">Ctrl+E</div>
<div class="msep" style="top:702px"></div>
</div>
<svg class="abs" style="left:40px;top:215px" width="160" height="50" font-family="Liberation Sans,sans-serif"><text x="8" y="26" font-size="22" font-weight="bold" fill="#fff" fill-opacity="0.62" textLength="119" lengthAdjust="spacingAndGlyphs" stroke="#cfcfcf" stroke-opacity="0.35" stroke-width="0.6">SOFTPEDIA</text><text x="132" y="17" font-size="7" fill="#fff" fill-opacity="0.7">®</text><text x="28.5" y="44" font-size="9" fill="#fff" fill-opacity="0.7" textLength="82" lengthAdjust="spacingAndGlyphs">www.softpedia.com</text></svg>
</body></html>
